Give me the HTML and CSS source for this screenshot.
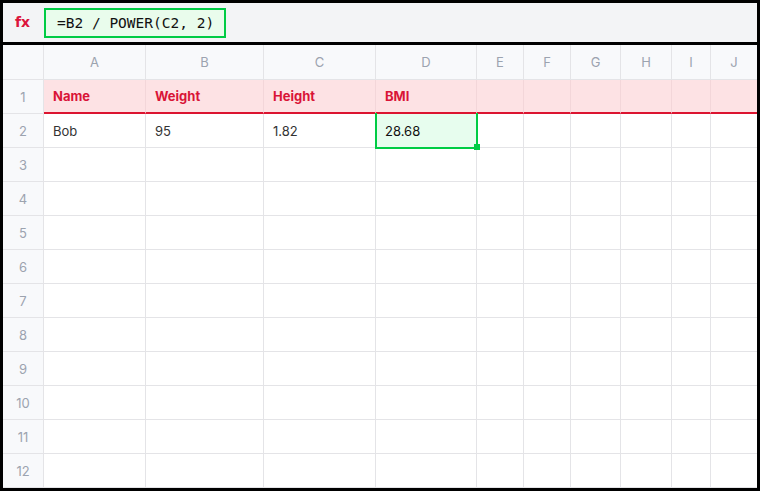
FILE: index.html
```html
<!DOCTYPE html>
<html>
<head>
<meta charset="utf-8">
<link rel="stylesheet" href="styles.css">
</head>
<body>
<div class="app">
  <div class="fbar">
    <span class="fx">fx</span>
    <div class="finput">=B2 / POWER(C2, 2)</div>
  </div>
  <div class="grid">
    <div class="ch rh"></div><div class="ch">A</div><div class="ch">B</div><div class="ch">C</div><div class="ch">D</div><div class="ch">E</div><div class="ch">F</div><div class="ch">G</div><div class="ch">H</div><div class="ch">I</div><div class="ch last">J</div>

    <div class="rh r1">1</div><div class="c hd">Name</div><div class="c hd">Weight</div><div class="c hd">Height</div><div class="c hd">BMI</div><div class="c hd"></div><div class="c hd"></div><div class="c hd"></div><div class="c hd"></div><div class="c hd"></div><div class="c hd last"></div>

    <div class="rh">2</div><div class="c">Bob</div><div class="c">95</div><div class="c">1.82</div><div class="c sel">28.68</div><div class="c"></div><div class="c"></div><div class="c"></div><div class="c"></div><div class="c"></div><div class="c last"></div>

    <div class="rh">3</div><div class="c"></div><div class="c"></div><div class="c"></div><div class="c"></div><div class="c"></div><div class="c"></div><div class="c"></div><div class="c"></div><div class="c"></div><div class="c last"></div>
    <div class="rh">4</div><div class="c"></div><div class="c"></div><div class="c"></div><div class="c"></div><div class="c"></div><div class="c"></div><div class="c"></div><div class="c"></div><div class="c"></div><div class="c last"></div>
    <div class="rh">5</div><div class="c"></div><div class="c"></div><div class="c"></div><div class="c"></div><div class="c"></div><div class="c"></div><div class="c"></div><div class="c"></div><div class="c"></div><div class="c last"></div>
    <div class="rh">6</div><div class="c"></div><div class="c"></div><div class="c"></div><div class="c"></div><div class="c"></div><div class="c"></div><div class="c"></div><div class="c"></div><div class="c"></div><div class="c last"></div>
    <div class="rh">7</div><div class="c"></div><div class="c"></div><div class="c"></div><div class="c"></div><div class="c"></div><div class="c"></div><div class="c"></div><div class="c"></div><div class="c"></div><div class="c last"></div>
    <div class="rh">8</div><div class="c"></div><div class="c"></div><div class="c"></div><div class="c"></div><div class="c"></div><div class="c"></div><div class="c"></div><div class="c"></div><div class="c"></div><div class="c last"></div>
    <div class="rh">9</div><div class="c"></div><div class="c"></div><div class="c"></div><div class="c"></div><div class="c"></div><div class="c"></div><div class="c"></div><div class="c"></div><div class="c"></div><div class="c last"></div>
    <div class="rh">10</div><div class="c"></div><div class="c"></div><div class="c"></div><div class="c"></div><div class="c"></div><div class="c"></div><div class="c"></div><div class="c"></div><div class="c"></div><div class="c last"></div>
    <div class="rh">11</div><div class="c"></div><div class="c"></div><div class="c"></div><div class="c"></div><div class="c"></div><div class="c"></div><div class="c"></div><div class="c"></div><div class="c"></div><div class="c last"></div>
    <div class="rh">12</div><div class="c"></div><div class="c"></div><div class="c"></div><div class="c"></div><div class="c"></div><div class="c"></div><div class="c"></div><div class="c"></div><div class="c"></div><div class="c last"></div>
  </div>
</div>
</body>
</html>
```

FILE: styles.css
```css
* { box-sizing: border-box; }
html, body { margin: 0; padding: 0; background: #000; }
body { font-family: Inter, "Liberation Sans", sans-serif; }
.app {
  width: 760px;
  height: 491px;
  border: 3px solid #000;
  background: #fff;
  overflow: hidden;
}
.fbar {
  height: 42px;
  background: #f3f4f6;
  border-bottom: 3px solid #000;
  display: flex;
  align-items: center;
  padding-left: 12px;
  gap: 16px;
}
.fx {
  color: #dc143c;
  font-weight: 700;
  font-size: 14px;
  font-family: "DejaVu Sans", sans-serif;
  width: 13px;
  margin-top: -1px;
}
.finput {
  height: 30px;
  width: 182px;
  border: 2px solid #00cc44;
  background: #e9fcec;
  font-family: "DejaVu Sans Mono", monospace;
  font-size: 14.5px;
  color: #111;
  display: flex;
  align-items: center;
  padding-left: 11px;
}
.grid {
  display: grid;
  grid-template-columns: 41px 102px 118px 112px 101px 47px 47px 50px 51px 39px 46px;
  grid-template-rows: 35px 34px repeat(11, 34px);
}
.ch, .rh, .c {
  border-right: 1px solid #e4e4e7;
  border-bottom: 1px solid #e4e4e7;
  font-size: 13px;
  display: flex;
  align-items: center;
}
.ch {
  background: #f8f9fb;
  color: #9ca3af;
  justify-content: center;
}
.rh {
  background: #f8f9fb;
  color: #9ca3af;
  justify-content: center;
}
.last { border-right: none; }
.c {
  padding-left: 9px;
  color: #333;
}
.hd {
  background: #fde2e4;
  color: #d91437;
  font-weight: 700;
  border-bottom: 2px solid #dc1430;
  border-right-color: #f3d6d9;
}
.sel {
  position: relative;
  background: #e7fdee;
  color: #111;
  border: none;
}
.sel::before {
  content: "";
  position: absolute;
  left: -1px;
  top: -1px;
  right: -1px;
  bottom: -1px;
  border: 2px solid #00cc44;
  border-top: none;
}
.sel::after {
  content: "";
  position: absolute;
  width: 6px;
  height: 6px;
  right: -3px;
  bottom: -2px;
  background: #00cc44;
}
```
